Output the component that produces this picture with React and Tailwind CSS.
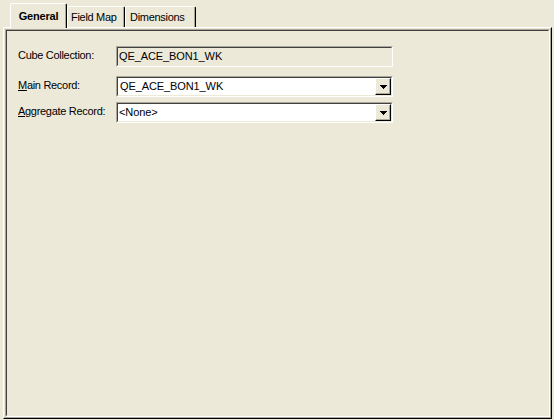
import React from "react";

const font = { fontFamily: '"Liberation Sans", Arial, sans-serif' };

function Tab({ label, selected, padLeft }) {
  if (selected) {
    return (
      <div className="relative z-10 h-[25px] w-[57px] bg-[#ece9d8] border-t border-l border-r border-t-white border-l-white border-r-black rounded-t-[2px] shadow-[inset_-1px_0_0_#aca899] flex items-start justify-center pt-[6px]">
        <span className="text-[11px] font-bold leading-[13px] tracking-[-0.2px] text-black">{label}</span>
      </div>
    );
  }
  return (
    <div
      className={
        "h-[22px] bg-[#ece9d8] border-t border-l border-r border-t-white border-l-white border-r-black rounded-t-[2px] shadow-[inset_-1px_0_0_#aca899] flex items-start pt-[4px] " +
        padLeft
      }
    >
      <span className="text-[11px] leading-[13px] tracking-[-0.3px] text-black">{label}</span>
    </div>
  );
}

function DropArrow() {
  return (
    <div className="w-[16px] h-[17px] bg-[#ece9d8] border border-t-white border-l-white border-r-black border-b-black shadow-[inset_-1px_-1px_0_#aca899] flex items-center justify-center">
      <svg width="7" height="4" viewBox="0 0 7 4" shapeRendering="crispEdges">
        <path d="M0 0h7v1H0zM1 1h5v1H1zM2 2h3v1H2zM3 3h1v1H3z" fill="#000" />
      </svg>
    </div>
  );
}

function Sunken({ children, white }) {
  return (
    <div className="w-[277px] h-[21px] border border-t-[#aca899] border-l-[#aca899] border-r-white border-b-white">
      <div
        className={
          "w-full h-full border border-t-[#404040] border-l-[#404040] border-r-[#ece9d8] border-b-[#ece9d8] flex items-center " +
          (white ? "bg-white" : "bg-[#ece9d8]")
        }
      >
        {children}
      </div>
    </div>
  );
}

function Label({ children }) {
  return (
    <div className="w-[98px] text-[11px] leading-[13px] tracking-[-0.3px] text-black -mt-[2px]">{children}</div>
  );
}

export default function App() {
  return (
    <div className="w-[554px] h-[420px] bg-[#ece9d8] flex flex-col" style={font}>
      {/* tab strip */}
      <div className="h-[28px] flex items-end pl-[10px]">
        <Tab label="General" selected />
        <div className="w-[58px]">
          <Tab label="Field Map" padLeft="pl-[3px]" />
        </div>
        <div className="w-[71px]">
          <Tab label="Dimensions" padLeft="pl-[4px]" />
        </div>
      </div>

      {/* tab page */}
      <div className="-mt-px ml-[3px] w-[549px] h-[392px] border border-t-white border-l-white border-r-black border-b-black shadow-[inset_-1px_-1px_0_#aca899] p-px">
        <div className="w-full h-full border border-t-[#aca899] border-l-[#aca899] border-r-white border-b-white">
          <div className="w-full h-full border border-t-[#404040] border-l-[#404040] border-r-[#ece9d8] border-b-[#ece9d8] pl-[11px] pt-[15px] flex flex-col">
            <div className="flex items-center">
              <Label>Cube Collection:</Label>
              <Sunken>
                <span className="pl-[1px] text-[11px] leading-[13px] tracking-[-0.1px] text-black">QE_ACE_BON1_WK</span>
              </Sunken>
            </div>

            <div className="flex items-center mt-[9px]">
              <Label>
                <span className="underline underline-offset-[1px]">M</span>ain Record:
              </Label>
              <Sunken white>
                <span className="flex-1 pl-[2px] text-[11px] leading-[13px] tracking-[-0.1px] text-black">QE_ACE_BON1_WK</span>
                <DropArrow />
              </Sunken>
            </div>

            <div className="flex items-center mt-[5px]">
              <Label>
                <span className="underline underline-offset-[1px]">A</span>ggregate Record:
              </Label>
              <Sunken white>
                <span className="flex-1 pl-[1px] text-[11px] leading-[13px] tracking-[-0.1px] text-black">&lt;None&gt;</span>
                <DropArrow />
              </Sunken>
            </div>
          </div>
        </div>
      </div>
    </div>
  );
}
